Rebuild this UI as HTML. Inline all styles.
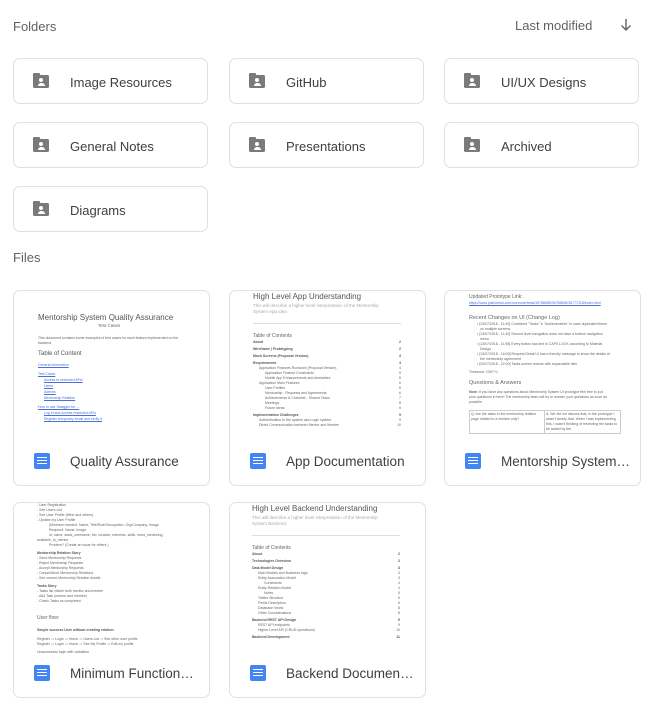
<!DOCTYPE html>
<html><head><style>
*{box-sizing:border-box;margin:0;padding:0}
body{width:656px;height:710px;background:#fff;font-family:"Liberation Sans",sans-serif;position:relative;overflow:hidden;color:#3c4043}
.h{position:absolute;font-size:13px;color:#5f6368}
.f{position:absolute;width:195px;height:46px;border:1px solid #e0e0e0;border-radius:7px;background:#fff}
.f .ic{position:absolute;left:19px;top:16px;width:16px;height:13px;background:#7a7a7a;border-radius:1.5px}
.f .ic:before{content:"";position:absolute;left:0;top:-2px;width:7px;height:3px;background:#7a7a7a;border-radius:1px 1px 0 0}
.f .ic i{position:absolute;left:6px;top:3px;width:4px;height:4px;border-radius:50%;background:#fff}
.f .ic b{position:absolute;left:4.5px;top:8px;width:7px;height:2.5px;border-radius:3px 3px 0 0;background:#fff}
.f span{position:absolute;left:56px;top:16px;font-size:13px;color:#3c4043}
.c{position:absolute;width:197px;height:196px;border:1px solid #e0e0e0;border-radius:7px;background:#fff;overflow:hidden}
.pv{position:absolute;left:0;top:0;width:100%;height:152px;overflow:hidden;font-size:3.5px;line-height:5px;color:#666}
.pv p{white-space:nowrap;overflow:hidden}
.doc{position:absolute;left:20px;top:162px;width:16px;height:16px;background:#4285f4;border-radius:2px}
.doc i{position:absolute;left:3px;width:10px;height:1.3px;background:#fff}
.t{position:absolute;left:56px;top:163px;font-size:13.5px;color:#3c4043;white-space:nowrap;width:130px;overflow:hidden;text-overflow:ellipsis}
.lk{color:#4a6fd8;text-decoration:underline}
.b{font-weight:bold;color:#555}
.r{display:flex;justify-content:space-between;width:148px}
</style></head><body>
<div class="h" style="left:13px;top:19px">Folders</div>
<div class="h" style="left:515px;top:18px">Last modified</div>
<svg style="position:absolute;left:619px;top:18px" width="14" height="14" viewBox="0 0 14 14"><path d="M7 1v11M2.5 7.5L7 12l4.5-4.5" stroke="#5f6368" stroke-width="1.4" fill="none"/></svg>

<div class="f" style="left:13px;top:58px"><div class="ic"><i></i><b></b></div><span>Image Resources</span></div>
<div class="f" style="left:229px;top:58px"><div class="ic"><i></i><b></b></div><span>GitHub</span></div>
<div class="f" style="left:444px;top:58px"><div class="ic"><i></i><b></b></div><span>UI/UX Designs</span></div>
<div class="f" style="left:13px;top:122px"><div class="ic"><i></i><b></b></div><span>General Notes</span></div>
<div class="f" style="left:229px;top:122px"><div class="ic"><i></i><b></b></div><span>Presentations</span></div>
<div class="f" style="left:444px;top:122px"><div class="ic"><i></i><b></b></div><span>Archived</span></div>
<div class="f" style="left:13px;top:186px"><div class="ic"><i></i><b></b></div><span>Diagrams</span></div>

<div class="h" style="left:13px;top:250px">Files</div>

<div class="c" style="left:13px;top:290px">
<div class="pv" style="padding:22px 0 0 24px">
<p style="font-size:8px;line-height:10px;color:#555;padding-left:0">Mentorship System Quality Assurance</p>
<p style="font-size:4.5px;padding-left:60px">Test Cases</p>
<p style="margin-top:8px">This document contains some examples of test cases for each feature implemented on the</p><p>backend</p>
<p style="font-size:6px;line-height:8px;color:#555;margin-top:4px">Table of Content</p>
<p class="lk" style="margin-top:4px;line-height:6px">General information</p>
<p class="lk" style="margin-top:3px;line-height:6px">Test Cases</p>
<p class="lk" style="padding-left:6px;line-height:6px">Access to restricted APIs</p>
<p class="lk" style="padding-left:6px;line-height:6px">Users</p>
<p class="lk" style="padding-left:6px;line-height:6px">Admins</p>
<p class="lk" style="padding-left:6px;line-height:6px">Mentorship Relation</p>
<p class="lk" style="margin-top:3px;line-height:6px">How to use Swagger for ...</p>
<p class="lk" style="padding-left:6px;line-height:6px">Log in and Access restricted APIs</p>
<p class="lk" style="padding-left:6px;line-height:6px">Register temporary email and verify it</p>
</div>
<div class="doc"><i style="top:4px"></i><i style="top:7px"></i><i style="top:10px"></i></div>
<div class="t">Quality Assurance</div></div>

<div class="c" style="left:229px;top:290px">
<div class="pv" style="padding:0 0 0 23px">
<p style="font-size:8px;line-height:12px;color:#555">High Level App Understanding</p>
<p style="font-size:4.5px;line-height:6px;color:#aaa">This will describe a higher level interpretation of the Mentorship</p><p style="font-size:4.5px;line-height:6px;color:#aaa">System App idea</p>
<div style="width:148px;border-top:1px solid #ddd;margin:8px 0"></div>
<p style="font-size:5px;line-height:8px">Table of Contents</p>
<div class="r b"><span>About</span><span>2</span></div>
<div class="r b" style="margin-top:2px"><span>Wireframe | Prototyping</span><span>2</span></div>
<div class="r b" style="margin-top:2px"><span>Mock Screens (Proposal Version)</span><span>3</span></div>
<div class="r b" style="margin-top:2px"><span>Requirements</span><span>4</span></div>
<div class="r"><span style="padding-left:6px">Application Features Rundown (Proposal Version)</span><span>4</span></div>
<div class="r"><span style="padding-left:12px">Application Feature Constraints</span><span>5</span></div>
<div class="r"><span style="padding-left:12px">Mobile App Enhancements and desirables</span><span>5</span></div>
<div class="r"><span style="padding-left:6px">Application Main Features</span><span>6</span></div>
<div class="r"><span style="padding-left:12px">User Profiles</span><span>6</span></div>
<div class="r"><span style="padding-left:12px">Mentorship - Requests and Agreements</span><span>6</span></div>
<div class="r"><span style="padding-left:12px">Achievements &amp; Checklist - Shared Tasks</span><span>7</span></div>
<div class="r"><span style="padding-left:12px">Meetings</span><span>8</span></div>
<div class="r"><span style="padding-left:12px">Future Ideas</span><span>9</span></div>
<div class="r b" style="margin-top:2px"><span>Implementation Challenges</span><span>9</span></div>
<div class="r"><span style="padding-left:6px">Authentication to the system aka Login system</span><span>9</span></div>
<div class="r"><span style="padding-left:6px">Direct Communication between Mentor and Mentee</span><span>10</span></div>
</div>
<div class="doc"><i style="top:4px"></i><i style="top:7px"></i><i style="top:10px"></i></div>
<div class="t">App Documentation</div></div>

<div class="c" style="left:444px;top:290px">
<div class="pv" style="padding:3px 0 0 24px">
<p style="font-size:5px;line-height:7px">Updated Prototype Link:</p>
<p class="lk">https://www.justinmind.com/usernote/tests/35788685/35788696/35777318/index.html</p>
<p style="font-size:5.5px;line-height:8px;margin-top:8px">Recent Changes on UI (Change Log)</p>
<p style="padding-left:8px">• [13/07/2018 - 11:40] Combined "Tasks" &amp; "Achievements" to save duplicated items</p><p style="padding-left:11px">on multiple screens.</p>
<p style="padding-left:8px">• [13/07/2018 - 11:40] Second level navigation does not have a bottom navigation</p><p style="padding-left:11px">menu</p>
<p style="padding-left:8px">• [13/07/2018 - 11:55] Every button has text in CAPS LOCK according to Material</p><p style="padding-left:11px">Design</p>
<p style="padding-left:8px">• [13/07/2018 - 16:00] Request Detail UI has a friendly message to show the details of</p><p style="padding-left:11px">the mentorship agreement</p>
<p style="padding-left:8px">• [20/07/2018 - 22:00] Tasks screen redone with expandable lists</p>
<p style="margin-top:3px">Timezone: GMT+1</p>
<p style="font-size:5.5px;line-height:8px;margin-top:4px">Questions &amp; Answers</p>
<p style="margin-top:3px"><b>Note:</b> If you have any questions about Mentorship System UI prototype feel free to put</p><p>your questions in here! The mentorship team will try to answer your questions as soon as</p><p>possible.</p>
<div style="display:flex;width:152px;border:1px solid #ccc;margin-top:5px;height:24px"><div style="width:50%;border-right:1px solid #ccc;padding:1px;white-space:normal">Q: Are the tasks in the mentorship relation page related to a mentee only?</div><div style="width:50%;padding:1px;white-space:normal">A: We did not discuss that, in the prototype I wasn't clearly that. When I was implementing this, I wasn't thinking of restricting the tasks to be added by the</div></div>
</div>
<div class="doc"><i style="top:4px"></i><i style="top:7px"></i><i style="top:10px"></i></div>
<div class="t">Mentorship System UI Prototype</div></div>

<div class="c" style="left:13px;top:502px">
<div class="pv" style="padding:0 0 0 23px">
<p>- User Registration</p><p>- See Users List</p><p>- See User Profile (Mine and others)</p><p>- Update my User Profile</p>
<p style="padding-left:12px">(Minimum needed: Name, Title/Role/Occupation, Org/Company, Image</p>
<p style="padding-left:12px">Required: Name, Image</p>
<p style="padding-left:12px">id, name, slack_username, bio, location, interests, skills, need_mentoring,</p>
<p>available_to_mentor</p><p style="padding-left:12px">Problem? (Create an issue for others )</p>
<p class="b" style="margin-top:3px">Mentorship Relation Story</p>
<p>- Send Mentorship Requests</p><p>- Reject Mentorship Requests</p><p>- Accept Mentorship Requests</p><p>- Cancel/Abort Mentorship Relations</p><p>- See current Mentorship Relation details</p>
<p class="b" style="margin-top:3px">Tasks Story</p>
<p>- Tasks list visible both mentor and mentee</p><p>- Add Task (mentor and mentee)</p><p>- Check Tasks as completed</p>
<p style="font-size:5px;line-height:8px;margin-top:10px">User flow:</p>
<p class="b" style="margin-top:6px">Simple success User without creating relation</p>
<p style="margin-top:4px">Register -&gt; Login -&gt; Home -&gt; Users List -&gt; See other user profile</p>
<p>Register -&gt; Login -&gt; Home -&gt; See My Profile -&gt; Edit my profile</p>
<p style="margin-top:3px">Unsuccessful login with validation</p>
</div>
<div class="doc"><i style="top:4px"></i><i style="top:7px"></i><i style="top:10px"></i></div>
<div class="t">Minimum Functional Requirements</div></div>

<div class="c" style="left:229px;top:502px">
<div class="pv" style="padding:0 0 0 22px">
<p style="font-size:8px;line-height:12px;color:#555">High Level Backend Understanding</p>
<p style="font-size:4.5px;line-height:6px;color:#aaa">This will describe a higher level interpretation of the Mentorship</p><p style="font-size:4.5px;line-height:6px;color:#aaa">System Backend.</p>
<div style="width:148px;border-top:1px solid #ddd;margin:8px 0"></div>
<p style="font-size:5px;line-height:8px">Table of Contents</p>
<div class="r b"><span>About</span><span>2</span></div>
<div class="r b" style="margin-top:2px"><span>Technologies Overview</span><span>2</span></div>
<div class="r b" style="margin-top:2px"><span>Data Model Design</span><span>3</span></div>
<div class="r"><span style="padding-left:6px">Main Models and Business logic</span><span>3</span></div>
<div class="r"><span style="padding-left:6px">Entity Association Model</span><span>3</span></div>
<div class="r"><span style="padding-left:12px">Constraints</span><span>4</span></div>
<div class="r"><span style="padding-left:6px">Entity Relation Model</span><span>4</span></div>
<div class="r"><span style="padding-left:12px">Notes</span><span>5</span></div>
<div class="r"><span style="padding-left:6px">Tables Structure</span><span>5</span></div>
<div class="r"><span style="padding-left:6px">Fields Description</span><span>6</span></div>
<div class="r"><span style="padding-left:6px">Database Views</span><span>8</span></div>
<div class="r"><span style="padding-left:6px">Other Considerations</span><span>8</span></div>
<div class="r b" style="margin-top:2px"><span>Backend REST API Design</span><span>9</span></div>
<div class="r"><span style="padding-left:6px">REST API endpoints</span><span>9</span></div>
<div class="r"><span style="padding-left:6px">Higher Level API (CRUD operations)</span><span>10</span></div>
<div class="r b" style="margin-top:2px"><span>Backend Development</span><span>11</span></div>
</div>
<div class="doc"><i style="top:4px"></i><i style="top:7px"></i><i style="top:10px"></i></div>
<div class="t">Backend Documentation</div></div>
</body></html>
